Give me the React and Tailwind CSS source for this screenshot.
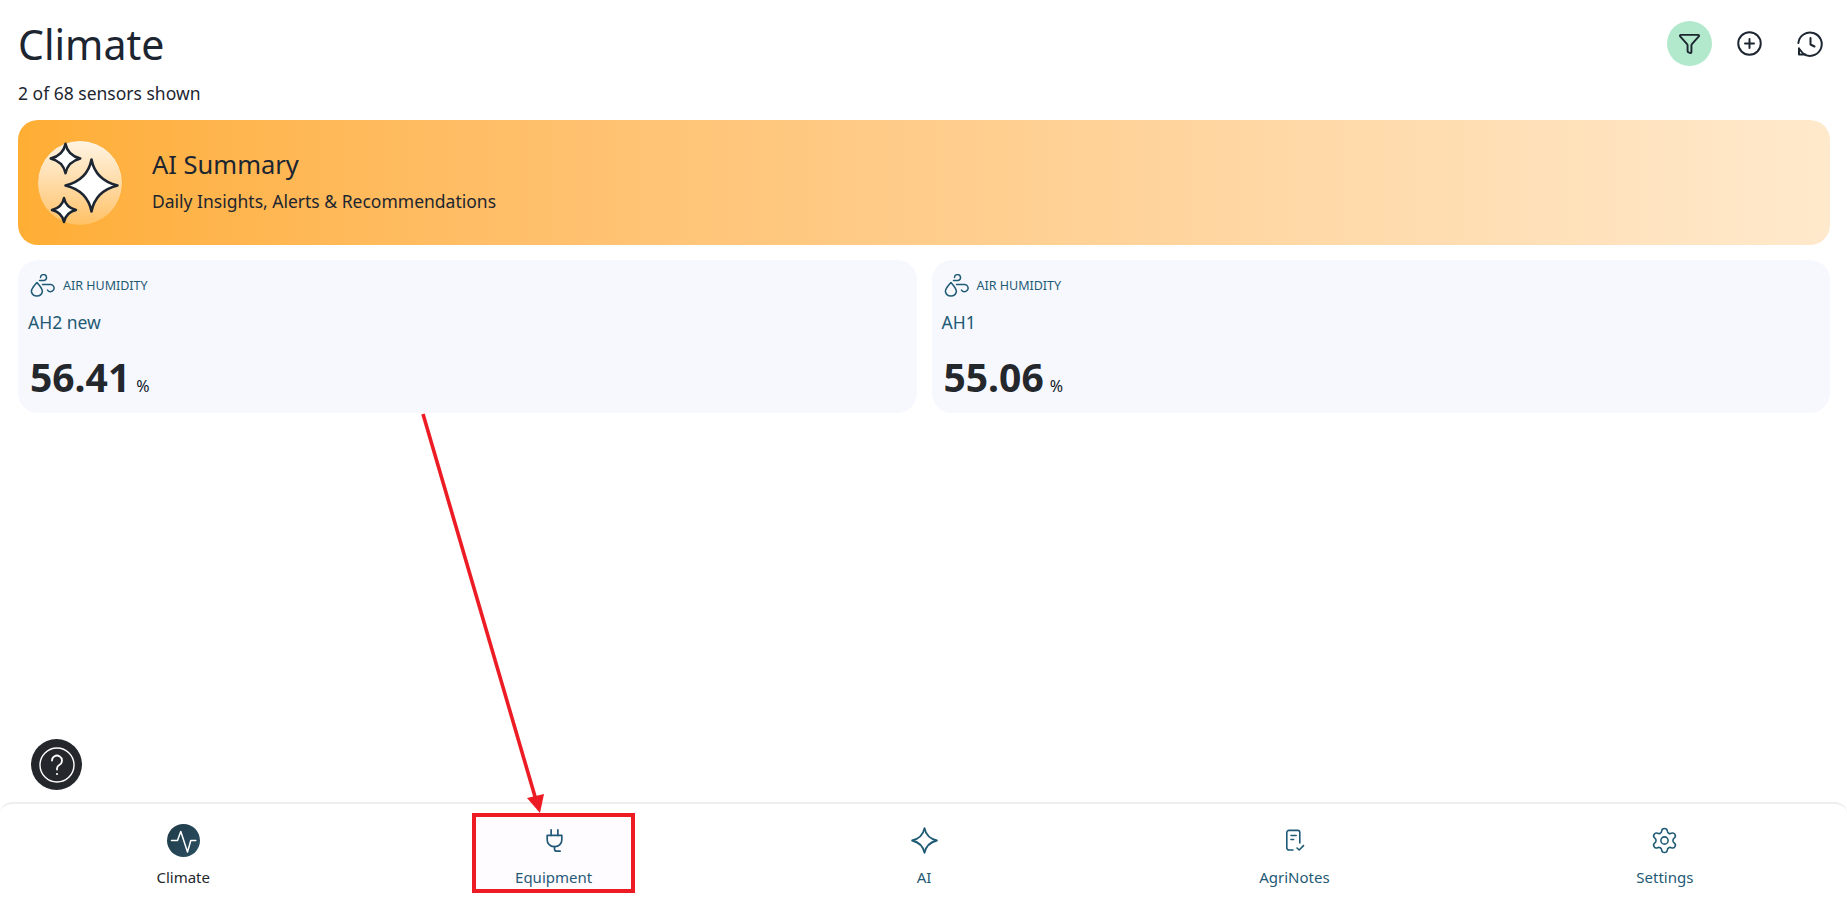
import React from "react";
import { Funnel, CirclePlus, Settings } from "lucide-react";

const font = { fontFamily: '"Noto Sans", sans-serif' };

function Sparkle({ className, fill = "none", sw = 1.5 }) {
  return (
    <svg viewBox="0 0 24 24" className={className} fill={fill} stroke="currentColor" strokeWidth={sw} strokeLinejoin="round" strokeLinecap="round">
      <path d="M12 2.4c1 5.2 3.9 8.2 9.6 9.6-5.7 1.4-8.6 4.4-9.6 9.6-1-5.2-3.9-8.2-9.6-9.6 5.7-1.4 8.6-4.4 9.6-9.6z" />
    </svg>
  );
}

function HumidityIcon() {
  return (
    <svg viewBox="0 0 25 24" className="w-[25px] h-[24px] text-[#1f5a75]" fill="none" stroke="currentColor" strokeWidth="1.5" strokeLinecap="round" strokeLinejoin="round">
      <path d="M7 8.5c2.8 3.2 5.4 5.8 5.4 9a5.6 5.6 0 0 1-11 0c0-3.2 2.8-5.8 5.6-9z" />
      <path d="M9.5 6.5h4.6a3 3 0 1 0-3.6-3" />
      <path d="M12.5 10.5h8.4a3.6 3.6 0 1 1-3.4 5.6" />
    </svg>
  );
}

function NotesIcon() {
  return (
    <svg viewBox="0 0 24 24" className="w-6 h-6" fill="none" stroke="currentColor" strokeWidth="1.6" strokeLinecap="round" strokeLinejoin="round">
      <path d="M11 22H7a2.2 2.2 0 0 1-2.2-2.2V4.6A2.2 2.2 0 0 1 7 2.4h8.6a2.2 2.2 0 0 1 2.2 2.2V15" />
      <path d="M9 7.5h5.2M9 11.5h2.6" />
      <path d="M15 20l2.2 2 4.3-4.4" />
    </svg>
  );
}

function Card({ name, value }) {
  return (
    <div className="flex-1 h-[153px] rounded-[20px] bg-[#f6f8fd] pl-[10px] pt-[14px]">
      <div className="flex items-center gap-[8px] pl-[2px]">
        <HumidityIcon />
        <span className="text-[12.5px] leading-[24px] text-[#1f5a75] uppercase">Air Humidity</span>
      </div>
      <div className="mt-[11px] text-[17.5px] leading-[26px] text-[#1f5a75]">{name}</div>
      <div className="mt-[18px] pl-[2px] flex items-baseline gap-[6px] text-[#24272c]">
        <span className="text-[39px] leading-[48px] font-bold">{value}</span>
        <span className="text-[16px] leading-[20px] text-[#111827]">%</span>
      </div>
    </div>
  );
}

function NavItem({ icon, label, active }) {
  return (
    <div className={`flex-1 flex flex-col items-center pt-[19px] ${active ? "text-[#24272c]" : "text-[#1f5a75]"}`}>
      <div className="w-[34px] h-[34px] flex items-center justify-center">{icon}</div>
      <span className="mt-[10px] text-[15px] leading-[20px]">{label}</span>
    </div>
  );
}

export default function App() {
  return (
    <div className="relative w-[1847px] h-[900px] bg-white overflow-hidden flex flex-col" style={font}>
      <div className="flex-1 pl-[18px] pr-[17px] pt-[15px]">
        <div className="flex items-start justify-between">
          <div>
            <h1 className="text-[41px] leading-[58px] text-[#1c2530]">Climate</h1>
            <p className="mt-[8px] text-[17.5px] leading-[24px] text-[#1c2530]">2 of 68 sensors shown</p>
          </div>
          <div className="flex items-center gap-[15px] pt-[6px] -mr-[2px] text-[#1c2530]">
            <div className="w-[45px] h-[45px] rounded-full bg-[#b2e9cd] flex items-center justify-center">
              <Funnel size={23} strokeWidth={2} />
            </div>
            <div className="w-[45px] h-[45px] flex items-center justify-center">
              <CirclePlus size={27} strokeWidth={1.75} />
            </div>
            <div className="w-[45px] h-[45px] flex items-center justify-center">
              <svg viewBox="0 0 32 32" className="w-8 h-8" fill="none" stroke="currentColor" strokeWidth="2" strokeLinecap="round" strokeLinejoin="round">
                <path d="M4.4 15A11.7 11.7 0 1 1 9 25.5L5 20.5" />
                <path d="M5 20.5v6h6.5" />
                <path d="M16.5 10v6.5l4 2" />
              </svg>
            </div>
          </div>
        </div>

        <div className="mt-[15px] h-[125px] rounded-[20px] bg-gradient-to-r from-[#ffae34] to-[#ffe9cc] flex items-center pl-[19px]">
          <div className="relative w-[86px] h-[86px] rounded-full border border-[#ffae34] bg-gradient-to-b from-[#fff4e3] to-[#ffc163] text-[#1c2530]">
            <Sparkle className="absolute left-[9px] -top-[1px] w-[37px] h-[37px]" fill="#ffffff" sw={1.6} />
            <Sparkle className="absolute left-[21px] top-[12px] w-[65px] h-[65px]" fill="#ffffff" sw={0.95} />
            <Sparkle className="absolute left-[11px] top-[54px] w-[30px] h-[30px]" fill="#ffffff" sw={2} />
          </div>
          <div className="ml-[29px] mb-[5px]">
            <div className="text-[25.5px] leading-[34px] text-[#1c2530]">AI Summary</div>
            <div className="mt-[8px] text-[17.5px] leading-[24px] text-[#1c2530]">Daily Insights, Alerts &amp; Recommendations</div>
          </div>
        </div>

        <div className="mt-[15px] flex gap-[15px]">
          <Card name="AH2 new" value="56.41" />
          <Card name="AH1" value="55.06" />
        </div>
      </div>

      <div className="relative h-[98px] rounded-t-[12px] border-t-2 border-[#eeeeee] bg-white">
        <div className="flex h-full -ml-[2px] -mr-[3px]">
          <NavItem
            active
            label="Climate"
            icon={
              <div className="w-[33px] h-[33px] rounded-full bg-gradient-to-br from-[#1f3a48] to-[#2b5062] text-white">
                <svg viewBox="0 0 33 33" className="w-[33px] h-[33px]" fill="none" stroke="currentColor" strokeWidth="1.5" strokeLinecap="round" strokeLinejoin="round">
                  <path d="M4.5 16.5H10.5L13.8 7.5 20.5 28 23.8 16.5H28.8" />
                </svg>
              </div>
            }
          />
          <NavItem
            label="Equipment"
            icon={
              <svg viewBox="0 0 24 24" className="w-[27px] h-[27px] translate-x-[1px]" fill="none" stroke="currentColor" strokeWidth="1.5" strokeLinecap="round" strokeLinejoin="round">
                <path d="M9 2.5v5M15 2.5v5" />
                <path d="M5.5 7.5h13v4a6 6 0 0 1-6 6h-1a6 6 0 0 1-6-6z" />
                <path d="M12 17.5v2a2 2 0 0 0 2 2h3" />
              </svg>
            }
          />
          <NavItem label="AI" icon={<Sparkle className="w-[31px] h-[31px]" sw={1.4} />} />
          <NavItem label="AgriNotes" icon={<NotesIcon />} />
          <NavItem label="Settings" icon={<Settings size={29} strokeWidth={1.3} />} />
        </div>
      </div>

      <div className="absolute left-[31px] top-[739px] w-[51px] h-[51px] rounded-full bg-[#24272c] flex items-center justify-center text-white">
        <svg viewBox="0 0 36 36" className="w-[36px] h-[36px]" fill="none" stroke="currentColor" strokeWidth="1.4" strokeLinecap="round">
          <circle cx="18" cy="18" r="17" />
          <path d="M13 13.5a5 5 0 1 1 7.6 4.3c-1.7 1-2.6 1.9-2.6 3.7v1" strokeWidth="1.8" />
          <circle cx="18" cy="27" r="1.1" fill="currentColor" stroke="none" />
        </svg>
      </div>

      <div className="absolute left-[472px] top-[813px] w-[163px] h-[80px] border-[4px] border-[#ed1c24] bg-[#ff00ff]/[0.01]" />
      <svg className="absolute left-0 top-0 w-[1847px] h-[900px] pointer-events-none" viewBox="0 0 1847 900">
        <path d="M423 414L536 800" stroke="#ed1c24" strokeWidth="3.6" fill="none" />
        <path d="M527 798L544 794 540 813Z" fill="#ed1c24" />
      </svg>
    </div>
  );
}
